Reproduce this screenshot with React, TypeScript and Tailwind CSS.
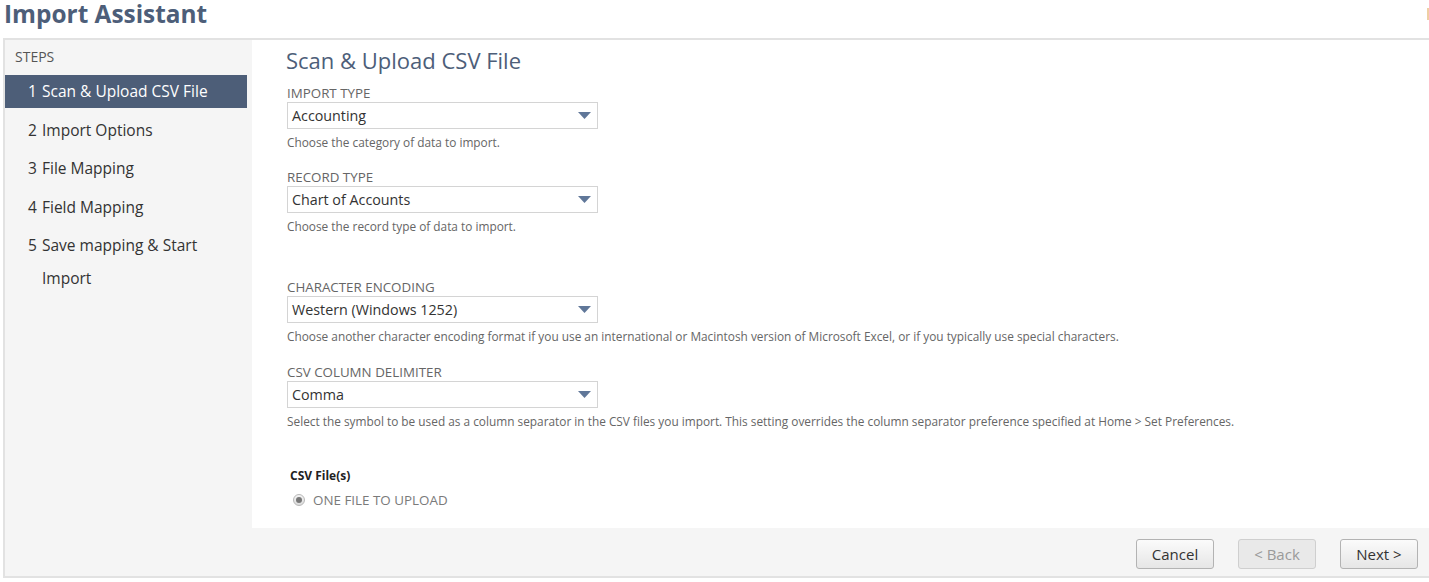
import React from 'react';

const font = { fontFamily: '"Open Sans", "Liberation Sans", sans-serif' };

const steps = [
  { n: 1, label: 'Scan & Upload CSV File', active: true },
  { n: 2, label: 'Import Options' },
  { n: 3, label: 'File Mapping' },
  { n: 4, label: 'Field Mapping' },
  { n: 5, label: 'Save mapping & Start', extra: 'Import' },
];

function Caret() {
  return (
    <svg width="13" height="7" viewBox="0 0 13 7" className="shrink-0">
      <polygon points="0,0 13,0 6.5,7" fill="#607799" />
    </svg>
  );
}

function SelectField({
  label,
  value,
  help,
  className = '',
}: {
  label: string;
  value: string;
  help: string;
  className?: string;
}) {
  return (
    <div className={className}>
      <div className="text-[13.35px] leading-4 text-[#666]">{label}</div>
      <div className="mt-px flex h-[27px] w-[311px] items-center justify-between border border-[#d4d4d4] bg-white pl-1 pr-[6px]">
        <span className="text-[14.3px] text-[#333]">{value}</span>
        <Caret />
      </div>
      <div className="mt-[5px] text-[11.85px] leading-4 text-[#666]">{help}</div>
    </div>
  );
}

function Btn({ children, disabled }: { children: React.ReactNode; disabled?: boolean }) {
  return (
    <button
      disabled={disabled}
      className={`h-[30px] w-[78px] rounded-[3px] border text-[15px] ${
        disabled
          ? 'border-[#cfcfcf] bg-[#e9e9e9] text-[#9a9a9a]'
          : 'border-[#b3b3b3] bg-gradient-to-b from-[#fbfbfb] to-[#e6e6e6] text-[#333]'
      }`}
    >
      {children}
    </button>
  );
}

export default function App() {
  return (
    <div className="relative h-[582px] w-[1429px] overflow-hidden bg-white" style={font}>
      <div className="absolute right-0 top-[8px] h-[12px] w-[2px] bg-[#efcfa4]" />
      <div className="flex h-[38px] items-start pl-1">
        <h1 className="text-[24.4px] font-bold leading-[28px] text-[#4d5e79]">Import Assistant</h1>
      </div>

      <div className="ml-[3px] flex flex-col border-y-2 border-l-2 border-[#e2e2e2] bg-[#f5f5f5]">
        <div className="flex h-[488px]">
          <aside className="w-[247px] shrink-0 pt-[8px]">
            <div className="pl-[10px] text-[14px] leading-[18px] text-[#555]">STEPS</div>
            <ul className="mt-[9px] flex flex-col gap-[5.5px] pr-[5px]">
              {steps.map((s) => (
                <li
                  key={s.n}
                  className={`flex pl-[23px] text-[15.5px] leading-[33px] ${
                    s.active ? 'bg-[#4d5e78] text-white' : 'text-[#333]'
                  }`}
                >
                  <span className="w-[14px] shrink-0">{s.n}</span>
                  <span>
                    {s.label}
                    {s.extra && <span className="block">{s.extra}</span>}
                  </span>
                </li>
              ))}
            </ul>
          </aside>

          <main className="flex-1 bg-white pl-[34px] pt-[6px]">
            <h2 className="text-[22px] leading-[28px] text-[#4d5e79]">Scan &amp; Upload CSV File</h2>
            <div className="pl-px">
              <SelectField
                className="mt-[11px]"
                label="IMPORT TYPE"
                value="Accounting"
                help="Choose the category of data to import."
              />
              <SelectField
                className="mt-[19px]"
                label="RECORD TYPE"
                value="Chart of Accounts"
                help="Choose the record type of data to import."
              />
              <SelectField
                className="mt-[45px]"
                label="CHARACTER ENCODING"
                value="Western (Windows 1252)"
                help="Choose another character encoding format if you use an international or Macintosh version of Microsoft Excel, or if you typically use special characters."
              />
              <SelectField
                className="mt-[20px]"
                label="CSV COLUMN DELIMITER"
                value="Comma"
                help="Select the symbol to be used as a column separator in the CSV files you import. This setting overrides the column separator preference specified at Home > Set Preferences."
              />
              <div className="mt-[39px] pl-[3px]">
                <div className="text-[12px] font-bold leading-4 text-[#222]">CSV File(s)</div>
                <label className="mt-[6px] flex items-center gap-[8px] pl-[3px]">
                  <span className="flex h-[12px] w-[12px] items-center justify-center rounded-full border border-[#b8b8b8] bg-gradient-to-b from-[#f4f4f4] to-[#dcdcdc]">
                    <span className="h-[6px] w-[6px] rounded-full bg-[#777]" />
                  </span>
                  <span className="text-[13.4px] text-[#7a7a7a]">ONE FILE TO UPLOAD</span>
                </label>
              </div>
            </div>
          </main>
        </div>

        <footer className="flex h-[48px] items-start justify-end gap-[24px] pr-[11px] pt-[11px]">
          <Btn>Cancel</Btn>
          <Btn disabled>&lt; Back</Btn>
          <Btn>Next &gt;</Btn>
        </footer>
      </div>
    </div>
  );
}
